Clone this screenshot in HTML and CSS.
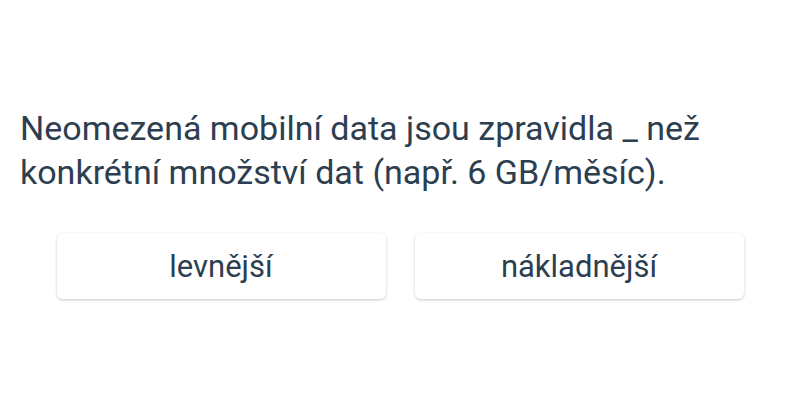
FILE: index.html
```html
<!DOCTYPE html>
<html lang="cs">
<head>
<meta charset="utf-8">
<link rel="stylesheet" href="styles.css">
</head>
<body>
<main class="quiz">
  <p class="question">Neomezená mobilní data jsou zpravidla _ než konkrétní množství dat (např. 6 GB/měsíc).</p>
  <div class="options">
    <button class="option">levnější</button>
    <button class="option">nákladnější</button>
  </div>
</main>
</body>
</html>
```
FILE: styles.css
```css
html, body {
  margin: 0;
  padding: 0;
  background: #ffffff;
}
body {
  font-family: Roboto, "Noto Sans", sans-serif;
  color: #2c3e50;
}
.quiz {
  height: 400px;
  box-sizing: border-box;
  padding: 106px 20px 0 20px;
  display: flex;
  flex-direction: column;
}
.question {
  margin: 0;
  font-size: 34px;
  line-height: 44px;
}
.options {
  margin-top: 39px;
  display: flex;
  justify-content: center;
  gap: 29px;
}
.option {
  width: 329px;
  height: 66px;
  background: #ffffff;
  border: none;
  border-radius: 6px;
  box-shadow: 0 1px 3px rgba(0, 0, 0, 0.22);
  font-family: Roboto, "Noto Sans", sans-serif;
  font-size: 31px;
  color: #2c3e50;
  padding: 0;
}
```
